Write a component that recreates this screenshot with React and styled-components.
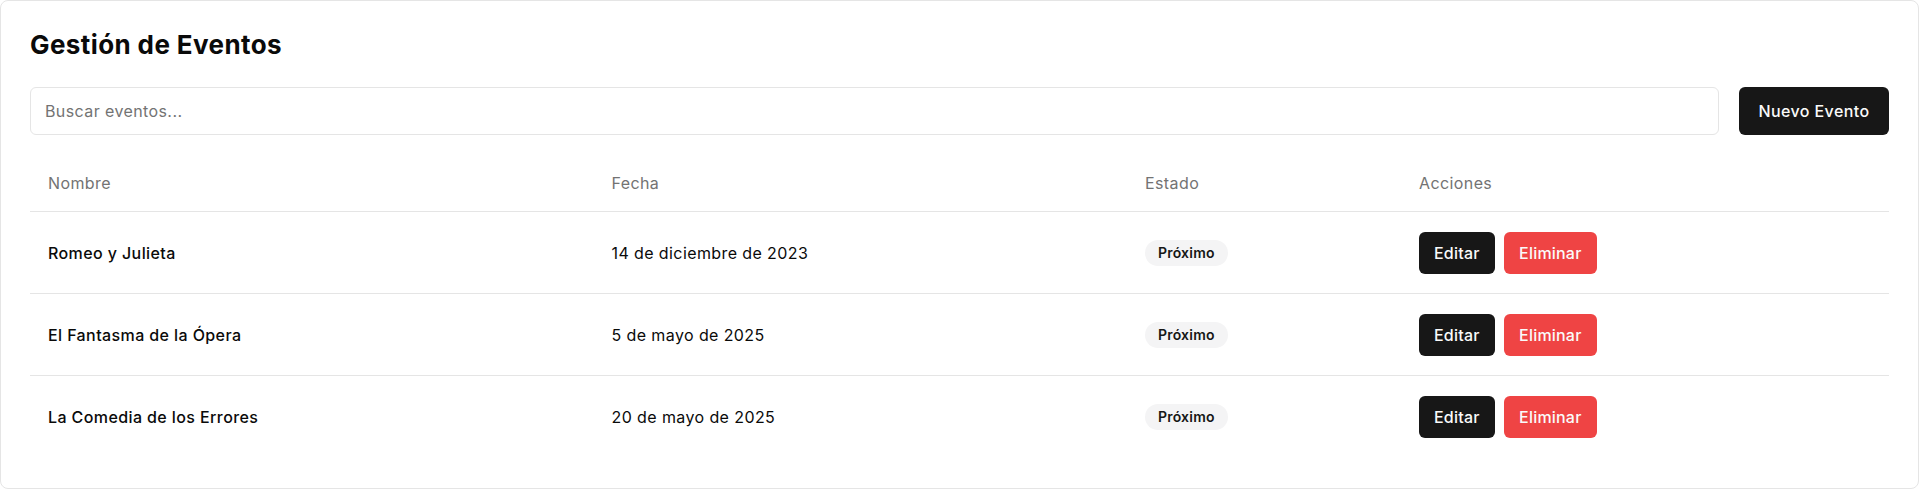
import React from "react";
import styled, { createGlobalStyle } from "styled-components";

const GlobalStyle = createGlobalStyle`
  html, body { margin: 0; padding: 0; background: #ffffff; }
  body { font-family: Inter, "Noto Sans", sans-serif; color: #0a0a0a; letter-spacing: 0.4px; }
  * { box-sizing: border-box; }
`;

const Card = styled.div`
  margin-right: 1px;
  border: 1px solid #e5e5e5;
  border-radius: 8px;
  background: #ffffff;
  padding: 28px 29px 31px;
`;

const Title = styled.h1`
  margin: 0 0 26px;
  font-size: 26px;
  line-height: 32px;
  font-weight: 700;
  letter-spacing: 0.4px;
  color: #0a0a0a;
`;

const Toolbar = styled.div`
  display: flex;
  align-items: center;
  gap: 20px;
  margin-bottom: 20px;
`;

const SearchInput = styled.input`
  flex: 1;
  height: 48px;
  border: 1px solid #e5e5e5;
  border-radius: 6px;
  padding: 0 14px;
  font-family: Inter, sans-serif;
  font-size: 16px;
  letter-spacing: 0.4px;
  color: #0a0a0a;
  background: #fff;
  outline: none;
  &::placeholder { color: #737373; }
`;

const Button = styled.button`
  border: none;
  border-radius: 6px;
  font-family: Inter, sans-serif;
  font-size: 16px;
  font-weight: 500;
  line-height: 24px;
  letter-spacing: ${(p) => (p.$size === "lg" ? "0.4px" : "0.2px")};
  color: #fafafa;
  cursor: pointer;
  white-space: nowrap;
  background: ${(p) => (p.$variant === "danger" ? "#ef4444" : "#171717")};
  height: ${(p) => (p.$size === "lg" ? "48px" : "42px")};
  padding: ${(p) => (p.$size === "lg" ? "0 19.5px" : "0 15px")};
`;

const Table = styled.div`
  display: grid;
  grid-template-columns: 563.5px 533.5px 274px 1fr;
`;

const Row = styled.div`
  display: contents;
`;

const HeadCell = styled.div`
  height: 57px;
  display: flex;
  align-items: center;
  padding: 0 18px 1px;
  border-bottom: 1px solid #e5e5e5;
  font-size: 16px;
  font-weight: 400;
  color: #737373;
`;

const Cell = styled.div`
  height: ${(p) => (p.$last ? "81px" : "82px")};
  display: flex;
  align-items: center;
  gap: 9.5px;
  padding: 0 18px;
  border-bottom: ${(p) => (p.$last ? "none" : "1px solid #e5e5e5")};
  font-size: 16px;
  font-weight: ${(p) => (p.$strong ? 500 : 400)};
  color: #0a0a0a;
`;

const Badge = styled.span`
  display: inline-flex;
  align-items: center;
  height: 26px;
  padding: 0 13px;
  border-radius: 999px;
  background: #f4f4f5;
  font-size: 14px;
  font-weight: 600;
  letter-spacing: 0.2px;
  color: #171717;
`;

const events = [
  { name: "Romeo y Julieta", date: "14 de diciembre de 2023" },
  { name: "El Fantasma de la Ópera", date: "5 de mayo de 2025" },
  { name: "La Comedia de los Errores", date: "20 de mayo de 2025" },
];

export default function App() {
  return (
    <>
      <GlobalStyle />
      <Card>
        <Title>Gestión de Eventos</Title>
        <Toolbar>
          <SearchInput placeholder="Buscar eventos..." />
          <Button $size="lg">Nuevo Evento</Button>
        </Toolbar>
        <Table>
          <Row>
            <HeadCell>Nombre</HeadCell>
            <HeadCell>Fecha</HeadCell>
            <HeadCell>Estado</HeadCell>
            <HeadCell>Acciones</HeadCell>
          </Row>
          {events.map((e, i) => {
            const last = i === events.length - 1;
            return (
              <Row key={e.name}>
                <Cell $last={last} $strong>{e.name}</Cell>
                <Cell $last={last}>{e.date}</Cell>
                <Cell $last={last}>
                  <Badge>Próximo</Badge>
                </Cell>
                <Cell $last={last}>
                  <Button>Editar</Button>
                  <Button $variant="danger">Eliminar</Button>
                </Cell>
              </Row>
            );
          })}
        </Table>
      </Card>
    </>
  );
}
